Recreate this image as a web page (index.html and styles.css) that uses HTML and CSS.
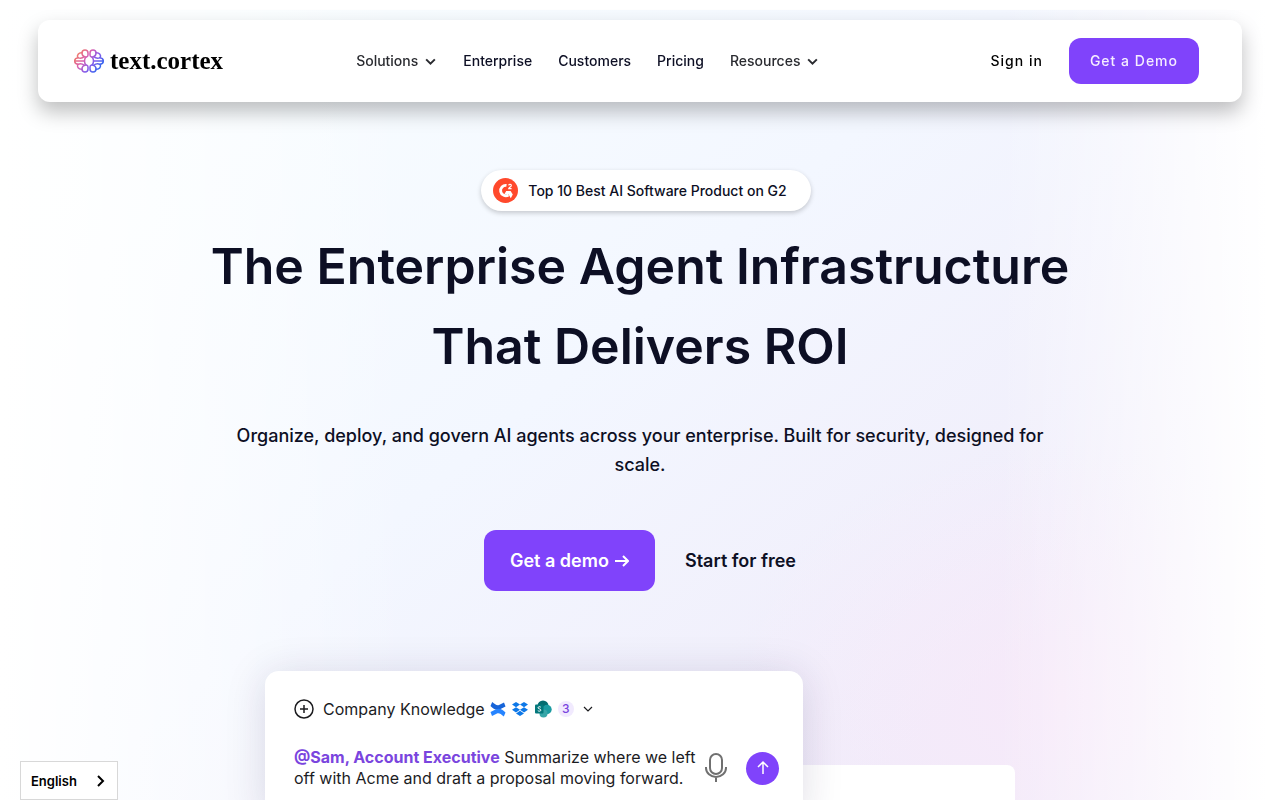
FILE: index.html
```html
<!DOCTYPE html>
<html lang="en">

<head>
    <meta charset="UTF-8">
    <meta name="viewport" content="width=device-width, initial-scale=1.0">
    <title>TextCortex</title>
    <link rel="stylesheet" href="styles.css">
</head>

<body>
    <header class="navbar">
        <a href="#" class="logo">
            <svg class="logo-icon" viewBox="0 0 90 72" aria-hidden="true">
                <defs>
                    <linearGradient id="brain" gradientUnits="userSpaceOnUse" x1="8" y1="8" x2="80" y2="66">
                        <stop offset="0" stop-color="#f4805c" />
                        <stop offset="0.35" stop-color="#d85fb0" />
                        <stop offset="0.6" stop-color="#8b5be8" />
                        <stop offset="1" stop-color="#1d6bf3" />
                    </linearGradient>
                </defs>
                <g fill="none" stroke="url(#brain)" stroke-width="4.500" stroke-linecap="round" stroke-linejoin="round">
                    <path d="M24 12a9 9 0 0 1 18 0v6c0 5-6 8-11 5-5-2-7-6-7-11z" />
                    <path d="M24 11c-10-1-17 8-12 15 6 3 13 2 19-3" />
                    <path d="M12 26C5 27 2 31 2 36h28M2 36c0 5 3 9 10 10" />
                    <path d="M24 61c-10 1-17-8-12-15 6-3 13-2 19 3" />
                    <path d="M24 60a9 9 0 0 0 18 0v-6c0-5-6-8-11-5-5 2-7 6-7 11z" />
                    <path d="M36 24c-6 6-6 18 0 24" />
                    <path d="M66 12a9 9 0 0 0-18 0v6c0 5 6 8 11 5 5-2 7-6 7-11z" />
                    <path d="M66 11c10-1 17 8 12 15-6 3-13 2-19-3" />
                    <path d="M78 26c7 1 10 5 10 10H60M88 36c0 5-3 9-10 10" />
                    <path d="M66 61c10 1 17-8 12-15-6-3-13-2-19 3" />
                    <path d="M66 60a9 9 0 0 1-18 0v-6c0-5 6-8 11-5 5 2 7 6 7 11z" />
                    <path d="M54 24c6 6 6 18 0 24" />
                </g>
            </svg>
            <span>text.cortex</span>
        </a>
        <nav>
            <button class="nav-item">Solutions
                <svg class="chevron" viewBox="0 0 12 8"><path d="M2 2l4 4 4-4" /></svg>
            </button>
            <a href="#">Enterprise</a>
            <a href="#">Customers</a>
            <a href="#">Pricing</a>
            <button class="nav-item">Resources
                <svg class="chevron" viewBox="0 0 12 8"><path d="M2 2l4 4 4-4" /></svg>
            </button>
        </nav>
        <div class="actions">
            <a href="#" class="sign-in">Sign in</a>
            <a href="#" class="demo-button">Get a Demo</a>
        </div>
    </header>

    <main class="hero">
        <a href="#" class="badge">
            <svg class="g2" viewBox="0 0 25 25" aria-hidden="true">
                <circle cx="12.5" cy="12.5" r="12.5" fill="#ff492c" />
                <path d="M13.500 7.400A5.200 5.200 0 1 0 15.500 17" fill="none" stroke="#fff" stroke-width="2.800" />
                <path d="M13.200 13h4.400l2.200 3.600-2 3.600-2.200-3.800h-4.400z" fill="#fff" />
                <path d="M15.600 7.400c.4-1.500 2.900-1.400 2.700.2-.1 1.200-2.300 1.600-2.600 3h2.900" fill="none" stroke="#fff" stroke-width="1.100" />
            </svg>
            <span>Top 10 Best AI Software Product on G2</span>
        </a>
        <h1>The Enterprise Agent Infrastructure That Delivers ROI</h1>
        <p class="subtitle">Organize, deploy, and govern AI agents across your enterprise. Built for security, designed for scale.</p>
        <div class="cta">
            <a href="#" class="cta-primary">Get a demo
                <svg class="arrow" viewBox="0 0 14 12"><path d="M0 6h13M8 1l5 5-5 5" /></svg>
            </a>
            <a href="#" class="cta-secondary">Start for free</a>
        </div>

        <div class="preview">
            <div class="result-card"></div>
            <div class="prompt-card">
                <div class="sources">
                    <svg class="plus" viewBox="0 0 20 20"><circle cx="10" cy="10" r="9" /><path d="M10 6v8M6 10h8" /></svg>
                    <span class="sources-label">Company Knowledge</span>
                    <div class="source-icons">
                        <!-- Confluence -->
                        <svg viewBox="0 0 16 16">
                            <path d="M2.200 1C5 3.500 7 4.800 9 4l5-2.500L15.500 5.500 10.500 8C7 9.800 3.500 8.500.500 5z" fill="#1764d8" />
                            <path d="M13.800 15.500C11 13 9 11.700 7 12.500L2 15 .500 11l5-2.500C9 6.700 12.500 8 15.500 11.500z" fill="#2684ff" />
                        </svg>
                        <!-- Dropbox -->
                        <svg viewBox="0 0 16 16" fill="#0d78e8">
                            <path d="M4 1l4 2.600-4 2.600L0 3.600zM12 1l4 2.600-4 2.600-4-2.600zM4 6.200l4 2.600-4 2.600-4-2.600zM12 6.200l4 2.600-4 2.600-4-2.600zM8 9.800l4 2.600L8 15l-4-2.600z" />
                        </svg>
                        <!-- SharePoint -->
                        <svg class="sharepoint" viewBox="0 0 18 18">
                            <circle cx="9" cy="6" r="5.500" fill="#036c70" />
                            <circle cx="13" cy="9.500" r="4.700" fill="#1a9ba1" />
                            <circle cx="9.500" cy="13.500" r="4" fill="#37a6a8" />
                            <rect x="1" y="4.500" width="8.500" height="9" rx="1" fill="#03787c" />
                            <path d="M6.800 7.200c-.8-.8-2.800-.6-2.800.6 0 1.400 2.900.8 2.900 2.300 0 1.300-2.200 1.400-3.100.5" fill="none" stroke="#fff" stroke-width="1" />
                        </svg>
                    </div>
                    <span class="count">3</span>
                    <svg class="chevron chevron-small" viewBox="0 0 12 8"><path d="M2 2l4 4 4-4" /></svg>
                </div>
                <div class="prompt">
                    <p><strong>@Sam, Account Executive</strong> Summarize where we left off with Acme and draft a proposal moving forward.</p>
                    <button class="mic" aria-label="Dictate">
                        <svg viewBox="0 0 22 30"><rect x="5" y="1" width="12" height="20" rx="6" /><path d="M1 14v1a10 9 0 0 0 20 0v-1M11 24v5" /></svg>
                    </button>
                    <button class="send" aria-label="Send">
                        <svg viewBox="0 0 14 16"><path d="M7 14V2M2 7l5-5 5 5" /></svg>
                    </button>
                </div>
            </div>
        </div>
    </main>

    <button class="language">English
        <svg viewBox="0 0 8 14"><path d="M1 2l5 5-5 5" /></svg>
    </button>
</body>

</html>
```
FILE: styles.css
```css
* {
    box-sizing: border-box;
}

body {
    font-family: Inter, "Liberation Sans", sans-serif;
    color: #0d0f24;
    margin: 0;
    background: #fff;
}

a {
    color: inherit;
    text-decoration: none;
}

button {
    font: inherit;
    color: inherit;
    background: none;
    border: none;
    padding: 0;
    cursor: pointer;
}

svg {
    display: block;
    flex: none;
}

.navbar {
    position: fixed;
    top: 20px;
    left: 38px;
    right: 38px;
    z-index: 10;
    display: flex;
    align-items: center;
    padding: 18px 43px 18px 36px;
    background: white;
    border-radius: 12px;
    box-shadow: 0 10px 20px rgba(0, 0, 0, 0.25);
}

.logo {
    display: flex;
    align-items: center;
    gap: 6px;
    color: black;
    font-family: "Liberation Serif", serif;
    font-size: 25px;
    font-weight: bold;
    line-height: 24px;
}

.logo-icon {
    width: 30px;
    height: 24px;
}

nav {
    display: flex;
    align-items: center;
    gap: 26px;
    margin-left: 133px;
    font-size: 14px;
    font-weight: 500;
    line-height: 20px;
}

.nav-item {
    display: flex;
    align-items: center;
    gap: 6px;
    color: #2a2b30;
}

.chevron {
    width: 13px;
    height: 9px;
    fill: none;
    stroke: currentColor;
    stroke-width: 1.8;
}

.actions {
    display: flex;
    align-items: center;
    gap: 26px;
    margin-left: auto;
    font-size: 14px;
    font-weight: 500;
    letter-spacing: 1px;
    line-height: 46px;
}

.sign-in {
    color: black;
}

.demo-button {
    padding: 0 21px;
    color: #f5edff;
    background: #8043fb;
    border-radius: 12px;
}

.hero {
    display: flex;
    flex-direction: column;
    align-items: center;
    margin-top: 10px;
    padding: 160px 20px 80px;
    background:
        linear-gradient(90deg, #fff 0%, rgba(255, 255, 255, 0) 32%, rgba(255, 255, 255, 0) 78%, #fff 99%),
        radial-gradient(ellipse 340px 260px at 83% 690px, rgba(253, 230, 248, 0.5), rgba(253, 230, 248, 0)),
        linear-gradient(140deg, #f8fdff 10%, #f3f7ff 38%, #f0ecfa 68%);
}

.badge {
    display: flex;
    align-items: center;
    gap: 10px;
    margin-left: 12px;
    padding: 8px 24px 8px 12px;
    background: white;
    border-radius: 21px;
    box-shadow: 0 2px 5px rgba(0, 0, 0, 0.2);
    font-size: 14px;
    font-weight: 500;
}

.g2 {
    width: 25px;
    height: 25px;
}

h1 {
    max-width: 900px;
    margin: 15px 0 0;
    font-size: 50px;
    font-weight: 600;
    line-height: 80px;
    text-align: center;
}

.subtitle {
    max-width: 840px;
    margin: 35px 0 0;
    font-size: 18px;
    font-weight: 500;
    line-height: 29px;
    text-align: center;
}

.cta {
    display: flex;
    align-items: center;
    gap: 30px;
    margin-top: 51px;
    font-size: 18px;
    font-weight: 600;
    line-height: 61px;
}

.cta-primary {
    display: flex;
    align-items: center;
    gap: 6px;
    padding: 0 26px;
    color: white;
    background: #8043fb;
    border-radius: 12px;
}

.arrow {
    width: 14px;
    height: 12px;
    fill: none;
    stroke: currentColor;
    stroke-width: 2;
}

.preview {
    display: grid;
    width: 100%;
    max-width: 750px;
    margin-top: 80px;
}

.result-card,
.prompt-card {
    grid-area: 1 / 1;
    background: white;
}

.result-card {
    margin: 94px 0 0 200px;
    border-radius: 8px;
    min-height: 300px;
}

.prompt-card {
    align-self: start;
    max-width: 538px;
    padding: 28px 24px 28px 29px;
    border-radius: 14px;
    box-shadow: 0 4px 40px rgba(40, 30, 80, 0.15);
    color: #1c1c1f;
    font-size: 16px;
}

.sources {
    display: flex;
    align-items: center;
    line-height: 20px;
}

.plus {
    width: 20px;
    height: 20px;
    margin-right: 9px;
    fill: none;
    stroke: #1c1c1f;
    stroke-width: 1.5;
}

.source-icons {
    display: flex;
    align-items: center;
    gap: 6px;
    margin: 0 6px 0 5px;
}

.source-icons svg {
    width: 16px;
    height: 16px;
}

.source-icons .sharepoint {
    width: 18px;
    height: 18px;
}

.count {
    width: 16px;
    margin-right: 8px;
    border-radius: 8px;
    background: #f1eafe;
    color: #7a45de;
    font-size: 12px;
    font-weight: 500;
    line-height: 16px;
    text-align: center;
}

.chevron-small {
    width: 12px;
    height: 8px;
    stroke-width: 1.2;
}

.prompt {
    display: flex;
    align-items: center;
    margin-top: 28px;
}

.prompt p {
    flex: 1;
    margin: 0;
    line-height: 21px;
}

.prompt strong {
    color: #7a45de;
}

.mic {
    margin-right: 19px;
}

.mic svg {
    width: 22px;
    height: 30px;
    fill: none;
    stroke: #707070;
    stroke-width: 2;
}

.send {
    display: flex;
    align-items: center;
    justify-content: center;
    width: 33px;
    height: 33px;
    border-radius: 50%;
    background: #8043fb;
}

.send svg {
    width: 14px;
    height: 16px;
    fill: none;
    stroke: white;
    stroke-width: 1.5;
}

.language {
    position: fixed;
    left: 20px;
    bottom: 0;
    display: flex;
    align-items: center;
    justify-content: space-between;
    width: 98px;
    height: 39px;
    padding: 0 12px 0 10px;
    border: 1px solid #d8d8d8;
    background: white;
    color: black;
    font-size: 13px;
    font-weight: 600;
}

.language svg {
    width: 8px;
    height: 14px;
    fill: none;
    stroke: black;
    stroke-width: 2;
}
```
